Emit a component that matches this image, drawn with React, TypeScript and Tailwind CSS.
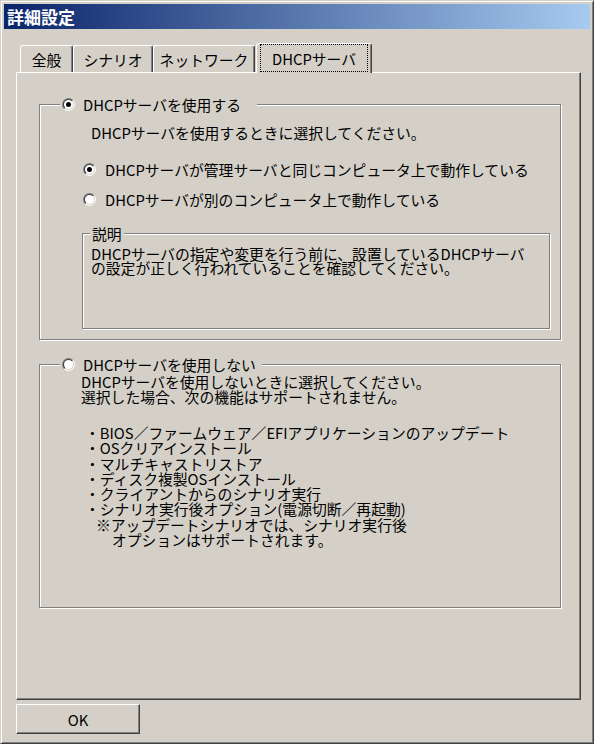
const FONT = "font-['Noto_Sans_CJK_JP','Noto_Sans_CJK_SC',sans-serif]";

function Radio({ checked }: { checked?: boolean }) {
  return (
    <span className="flex h-[13px] w-[13px] shrink-0 items-center justify-center rounded-full bg-[linear-gradient(135deg,#808080_50%,#ffffff_50%)]">
      <span className="flex h-[11px] w-[11px] items-center justify-center rounded-full bg-[linear-gradient(135deg,#404040_50%,#d4d0c8_50%)]">
        <span className="flex h-[9px] w-[9px] items-center justify-center rounded-full bg-white">
          {checked && <span className="h-[5px] w-[5px] rounded-full bg-black" />}
        </span>
      </span>
    </span>
  );
}

function Tab({ label, width }: { label: string; width: string }) {
  return (
    <div
      className={`flex h-[27px] ${width} items-center justify-center rounded-t-[3px] border-t border-l border-r border-t-white border-l-white border-r-[#404040] shadow-[inset_-1px_0_0_#808080]`}
    >
      {label}
    </div>
  );
}

const bullets = [
  "・BIOS／ファームウェア／EFIアプリケーションのアップデート",
  "・OSクリアインストール",
  "・マルチキャストリストア",
  "・ディスク複製OSインストール",
  "・クライアントからのシナリオ実行",
  "・シナリオ実行後オプション(電源切断／再起動)",
];

export default function App() {
  return (
    <div className={`h-[747px] w-[597px] bg-white text-[14.8px] leading-[15px] text-black ${FONT}`}>
      <div className="flex h-[744px] w-[594px] flex-col border border-[#d4d0c8] border-r-[#404040] border-b-[#404040] bg-[#d4d0c8] p-[3px] shadow-[inset_1px_1px_0_#fff,inset_-1px_-1px_0_#808080]">
        {/* title bar */}
        <div className="flex h-[25px] items-center bg-[linear-gradient(90deg,#0a246a,#a6caf0)] pl-[3px] text-[17px] leading-none font-bold text-white">
          詳細設定
        </div>

        {/* tabs */}
        <div className="mt-[14px] ml-[12px] flex h-[29px] items-end pl-[4px]">
          <Tab label="全般" width="w-[53px]" />
          <Tab label="シナリオ" width="w-[80px]" />
          <Tab label="ネットワーク" width="w-[102px]" />
          <div className="relative z-10 -mb-[1px] ml-[1px] flex h-[30px] w-[116px] rounded-t-[3px] border-t border-l border-r border-t-white border-l-white border-r-[#404040] bg-[#d4d0c8] shadow-[inset_-1px_0_0_#808080]">
            <div className="ml-[3px] flex h-[28px] w-[108px] items-center justify-center border border-dotted border-black">
              DHCPサーバ
            </div>
          </div>
        </div>

        {/* tab panel */}
        <div className="ml-[12px] h-[628px] w-[565px] border border-white border-r-[#404040] border-b-[#404040] shadow-[inset_-1px_-1px_0_#808080]">
          {/* group 1 */}
          <div className="relative mt-[31px] ml-[22px] h-[236px] w-[522px] border border-[#808080] shadow-[1px_1px_0_#fff,inset_1px_1px_0_#fff]">
            <div className="absolute top-[-8px] left-[20px] flex h-[15px] items-center gap-[8px] bg-[#d4d0c8] pr-[16px] pl-[2px]">
              <Radio checked />
              <span className="whitespace-nowrap">DHCPサーバを使用する</span>
            </div>

            <div className="mt-[20px] ml-[51px] whitespace-nowrap">
              DHCPサーバを使用するときに選択してください。
            </div>

            <div className="mt-[22px] ml-[43px] flex h-[15px] items-center gap-[9px] whitespace-nowrap">
              <Radio checked />
              <span>DHCPサーバが管理サーバと同じコンピュータ上で動作している</span>
            </div>
            <div className="mt-[15px] ml-[43px] flex h-[15px] items-center gap-[9px] whitespace-nowrap">
              <Radio />
              <span>DHCPサーバが別のコンピュータ上で動作している</span>
            </div>

            {/* description box */}
            <div className="relative mt-[26px] ml-[42px] h-[96px] w-[468px] border border-[#808080] pt-[13px] pl-[8px] leading-[14px] shadow-[1px_1px_0_#fff,inset_1px_1px_0_#fff]">
              <div className="absolute top-[-8px] left-[7px] bg-[#d4d0c8] px-[2px] leading-[15px]">
                説明
              </div>
              <p className="whitespace-nowrap">
                DHCPサーバの指定や変更を行う前に、設置しているDHCPサーバ
                <br />
                の設定が正しく行われていることを確認してください。
              </p>
            </div>
          </div>

          {/* group 2 */}
          <div className="relative mt-[24px] ml-[22px] h-[244px] w-[522px] border border-[#808080] shadow-[1px_1px_0_#fff,inset_1px_1px_0_#fff]">
            <div className="absolute top-[-8px] left-[20px] flex h-[15px] items-center gap-[8px] bg-[#d4d0c8] pr-[6px] pl-[2px]">
              <Radio />
              <span className="whitespace-nowrap">DHCPサーバを使用しない</span>
            </div>

            <p className="mt-[9px] ml-[41px] whitespace-nowrap">
              DHCPサーバを使用しないときに選択してください。
              <br />
              選択した場合、次の機能はサポートされません。
            </p>

            <ul className="mt-[21px] ml-[45px] leading-[15.3px] whitespace-nowrap">
              {bullets.map((b) => (
                <li key={b}>{b}</li>
              ))}
              <li className="pl-[11px]">※アップデートシナリオでは、シナリオ実行後</li>
              <li className="pl-[27px]">オプションはサポートされます。</li>
            </ul>
          </div>
        </div>

        {/* footer */}
        <button className="mt-[4px] ml-[12px] flex h-[30px] w-[124px] items-center justify-center border border-white border-r-[#404040] border-b-[#404040] shadow-[inset_-1px_-1px_0_#808080]">
          OK
        </button>
      </div>
    </div>
  );
}
